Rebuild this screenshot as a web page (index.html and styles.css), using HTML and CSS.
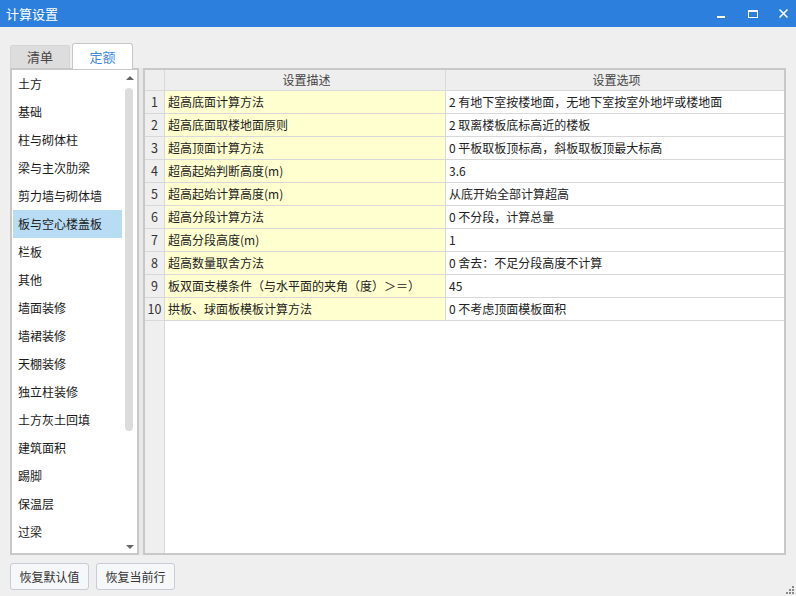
FILE: index.html
```html
<!DOCTYPE html>
<html lang="zh">
<head>
<meta charset="utf-8">
<title>计算设置</title>
<link rel="stylesheet" href="styles.css">
</head>
<body>
<div class="window">
  <div class="titlebar">
    <span class="title">计算设置</span>
    <div class="controls">
      <svg class="ctl" width="12" height="12" viewBox="0 0 12 12"><rect x="1" y="8" width="8" height="2" fill="#fff"/></svg>
      <svg class="ctl" width="12" height="12" viewBox="0 0 12 12"><rect x="1.5" y="2.5" width="9" height="7" fill="none" stroke="#fff" stroke-width="1"/><rect x="1" y="2" width="10" height="2" fill="#fff"/></svg>
      <svg class="ctl" width="12" height="12" viewBox="0 0 12 12"><path d="M1.5 1.5 L9.5 9.5 M9.5 1.5 L1.5 9.5" stroke="#fff" stroke-width="1.6"/></svg>
    </div>
  </div>

  <div class="content">
    <div class="tabs">
      <div class="tab">清单</div>
      <div class="tab active">定额</div>
    </div>

    <div class="panels">
      <div class="listbox">
        <ul class="list">
          <li>土方</li>
          <li>基础</li>
          <li>柱与砌体柱</li>
          <li>梁与主次肋梁</li>
          <li>剪力墙与砌体墙</li>
          <li class="sel">板与空心楼盖板</li>
          <li>栏板</li>
          <li>其他</li>
          <li>墙面装修</li>
          <li>墙裙装修</li>
          <li>天棚装修</li>
          <li>独立柱装修</li>
          <li>土方灰土回填</li>
          <li>建筑面积</li>
          <li>踢脚</li>
          <li>保温层</li>
          <li>过梁</li>
        </ul>
        <div class="vscroll">
          <span class="arr up"></span>
          <div class="track"><div class="thumb"></div></div>
          <span class="arr down"></span>
        </div>
      </div>
      <div class="splitter"></div>
      <div class="grid">
        <div class="row head">
          <div class="c num"></div>
          <div class="c desc">设置描述</div>
          <div class="c opt">设置选项</div>
        </div>
        <div class="row"><div class="c num">1</div><div class="c desc">超高底面计算方法</div><div class="c opt">2 有地下室按楼地面，无地下室按室外地坪或楼地面</div></div>
        <div class="row"><div class="c num">2</div><div class="c desc">超高底面取楼地面原则</div><div class="c opt">2 取离楼板底标高近的楼板</div></div>
        <div class="row"><div class="c num">3</div><div class="c desc">超高顶面计算方法</div><div class="c opt">0 平板取板顶标高，斜板取板顶最大标高</div></div>
        <div class="row"><div class="c num">4</div><div class="c desc">超高起始判断高度(m)</div><div class="c opt">3.6</div></div>
        <div class="row"><div class="c num">5</div><div class="c desc">超高起始计算高度(m)</div><div class="c opt">从底开始全部计算超高</div></div>
        <div class="row"><div class="c num">6</div><div class="c desc">超高分段计算方法</div><div class="c opt">0 不分段，计算总量</div></div>
        <div class="row"><div class="c num">7</div><div class="c desc">超高分段高度(m)</div><div class="c opt">1</div></div>
        <div class="row"><div class="c num">8</div><div class="c desc">超高数量取舍方法</div><div class="c opt">0 舍去：不足分段高度不计算</div></div>
        <div class="row"><div class="c num">9</div><div class="c desc">板双面支模条件（与水平面的夹角（度）＞＝）</div><div class="c opt">45</div></div>
        <div class="row"><div class="c num">10</div><div class="c desc">拱板、球面板模板计算方法</div><div class="c opt">0 不考虑顶面模板面积</div></div>
        <div class="row filler"><div class="c num"></div><div class="c blank"></div></div>
      </div>
    </div>

    <div class="buttons">
      <button class="btn">恢复默认值</button>
      <button class="btn">恢复当前行</button>
    </div>
  </div>
  <svg class="grip" width="8" height="8" viewBox="0 0 8 8">
    <rect x="6" y="0" width="2" height="2" fill="#888"/>
    <rect x="3" y="3" width="2" height="2" fill="#888"/>
    <rect x="6" y="3" width="2" height="2" fill="#888"/>
    <rect x="0" y="6" width="2" height="2" fill="#888"/>
    <rect x="3" y="6" width="2" height="2" fill="#888"/>
    <rect x="6" y="6" width="2" height="2" fill="#888"/>
  </svg>
</div>
</body>
</html>
```

FILE: styles.css
```css
* { box-sizing: border-box; }
html, body { margin: 0; padding: 0; }
body {
  width: 796px;
  height: 596px;
  background: #efefef;
  font-family: "Noto Sans CJK SC", "Microsoft YaHei", "Noto Sans", sans-serif;
  font-size: 12px;
  color: #222;
  overflow: hidden;
}
.window {
  position: relative;
  width: 796px;
  height: 596px;
  display: flex;
  flex-direction: column;
}
.titlebar {
  height: 27px;
  background: #2d7fdd;
  display: flex;
  align-items: center;
  justify-content: space-between;
  padding-left: 6px;
  padding-right: 6px;
  flex: none;
}
.title { color: #fff; font-size: 13px; line-height: 27px; }
.controls { display: flex; gap: 19px; align-items: center; }
.ctl { display: block; }

.content {
  flex: 1;
  padding: 15px 10px 0 10px;
  display: flex;
  flex-direction: column;
}
.tabs {
  display: flex;
  align-items: flex-end;
  height: 26px;
  gap: 2px;
}
.tab {
  width: 60px;
  height: 23px;
  background: #dddddd;
  border: 1px solid #d4d4d4;
  border-bottom: none;
  border-radius: 3px 3px 0 0;
  font-size: 13px;
  color: #444;
  text-align: center;
  line-height: 22px;
}
.tab.active {
  width: 61px;
  height: 26px;
  background: #fff;
  border-color: #c8c8c8;
  color: #3b88e3;
  line-height: 26px;
  margin-bottom: -1px;
  position: relative;
  z-index: 1;
}

.panels {
  display: flex;
  height: 487px;
}
.listbox {
  width: 129px;
  border: 2px solid #c8c8c8;
  background: #fff;
  display: flex;
}
.list {
  list-style: none;
  margin: 0;
  padding: 0 0 0 1px;
  flex: 1;
}
.list li {
  height: 28px;
  line-height: 28px;
  padding-left: 5px;
  font-size: 12px;
  color: #1a1a1a;
  white-space: nowrap;
}
.list li.sel { background: #b9dcf5; }
.vscroll {
  width: 15px;
  display: flex;
  flex-direction: column;
  align-items: center;
  padding: 6px 0 4px 0;
}
.arr {
  width: 0; height: 0;
  border-left: 4px solid transparent;
  border-right: 4px solid transparent;
  flex: none;
}
.arr.up { border-bottom: 4px solid #666; }
.arr.down { border-top: 4px solid #666; }
.track { flex: 1; width: 9px; padding: 8px 0 0 0; }
.thumb {
  width: 8px;
  height: 343px;
  background: #dcdcdc;
  border-radius: 4px;
  margin-left: 0;
}
.splitter {
  width: 5px;
  background: #e8e8e8;
  border-right: 1px solid #c8c8c8;
}

.grid {
  flex: 1;
  border: 2px solid #c8c8c8;
  border-left-width: 1px;
  background: #fff;
  display: flex;
  flex-direction: column;
}
.row {
  display: flex;
  height: 23px;
  flex: none;
}
.row.head { height: 21px; }
.c {
  border-right: 1px solid #d8d8d8;
  border-bottom: 1px solid #d8d8d8;
  line-height: 22px;
  white-space: nowrap;
  overflow: hidden;
}
.row.head .c {
  background: #eeeeee;
  text-align: center;
  color: #444;
  line-height: 20px;
}
.num {
  width: 20px;
  flex: none;
  background: #efefef;
  text-align: center;
  color: #333;
  font-size: 12.5px;
}
.desc {
  width: 281px;
  flex: none;
  background: #ffffd0;
  padding-left: 3px;
}
.opt {
  flex: 1;
  border-right: none;
  padding-left: 3px;
}
.row.filler { flex: 1; }
.row.filler .c { border-bottom: none; }
.row.filler .blank { flex: 1; border-right: none; }

.buttons {
  display: flex;
  gap: 7px;
  padding-top: 8px;
}
.btn {
  width: 79px;
  height: 27px;
  background: #f6f7f9;
  border: 1px solid #c9ccd6;
  border-radius: 3px;
  font-family: inherit;
  font-size: 12px;
  color: #333;
  padding: 0;
}
.grip {
  position: absolute;
  right: 2px;
  bottom: 2px;
}
```
